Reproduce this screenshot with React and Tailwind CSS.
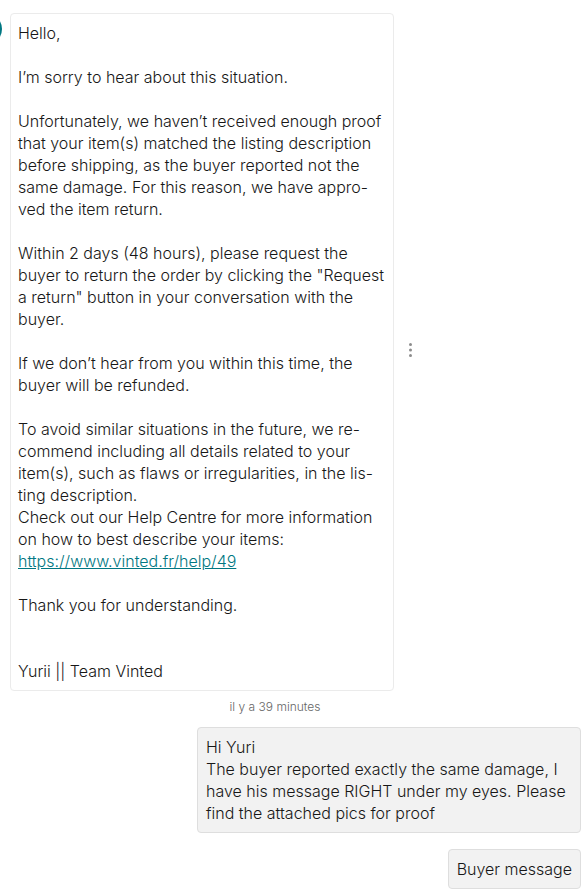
import React from 'react';

const reply = `Hello,

I’m sorry to hear about this situation.

Unfortunately, we haven’t received enough proof
that your item(s) matched the listing description
before shipping, as the buyer reported not the
same damage. For this reason, we have appro-
ved the item return.

Within 2 days (48 hours), please request the
buyer to return the order by clicking the "Request
a return" button in your conversation with the
buyer.

If we don’t hear from you within this time, the
buyer will be refunded.

To avoid similar situations in the future, we re-
commend including all details related to your
item(s), such as flaws or irregularities, in the lis-
ting description.
Check out our Help Centre for more information
on how to best describe your items:
`;

const signOff = `

Thank you for understanding.


Yurii || Team Vinted`;

const Avatar = () => (
  <div className="w-0.5 h-8 shrink-0 overflow-hidden flex justify-end">
    <div className="size-8 shrink-0 rounded-full bg-[#007782]"></div>
  </div>
);

const SupportMessage = () => (
  <div className="flex items-start">
    <Avatar />
    <div className="ml-2 w-full max-w-96 rounded border border-[#ebebeb] bg-white px-[7px] py-2 whitespace-pre-wrap">
      {reply}
      <a href="https://www.vinted.fr/help/49" className="text-[#007782] underline">
        https://www.vinted.fr/help/49
      </a>
      {signOff}
    </div>
    <button type="button" aria-label="Message options" className="self-center ml-2 pb-1 shrink-0 text-[#8c8c8c]">
      <svg className="size-4" viewBox="0 0 16 16" fill="currentColor">
        <circle cx="8.5" cy="2.5" r="1.5" />
        <circle cx="8.5" cy="8" r="1.5" />
        <circle cx="8.5" cy="13.5" r="1.5" />
      </svg>
    </button>
  </div>
);

const UserMessage = ({ children }) => (
  <div className="max-w-96 rounded border border-[#dedede] bg-[#f2f2f2] px-2 py-2 whitespace-pre-wrap">
    {children}
  </div>
);

const App = () => {
  return (
    <main className="bg-white pt-[13px] text-base leading-[22px] font-light text-[#171717] font-['Inter','Liberation_Sans',sans-serif]">
      <SupportMessage />
      <div className="pt-2 pr-9 text-center text-xs leading-4 text-[#666666]">il y a 39 minutes</div>
      <div className="flex flex-col items-end gap-4 pt-3 pr-[5px]">
        <UserMessage>
          {`Hi Yuri
The buyer reported exactly the same damage, I have his message RIGHT under my eyes. Please find the attached pics for proof`}
        </UserMessage>
        <UserMessage>Buyer message</UserMessage>
      </div>
    </main>
  );
};

export default App;
